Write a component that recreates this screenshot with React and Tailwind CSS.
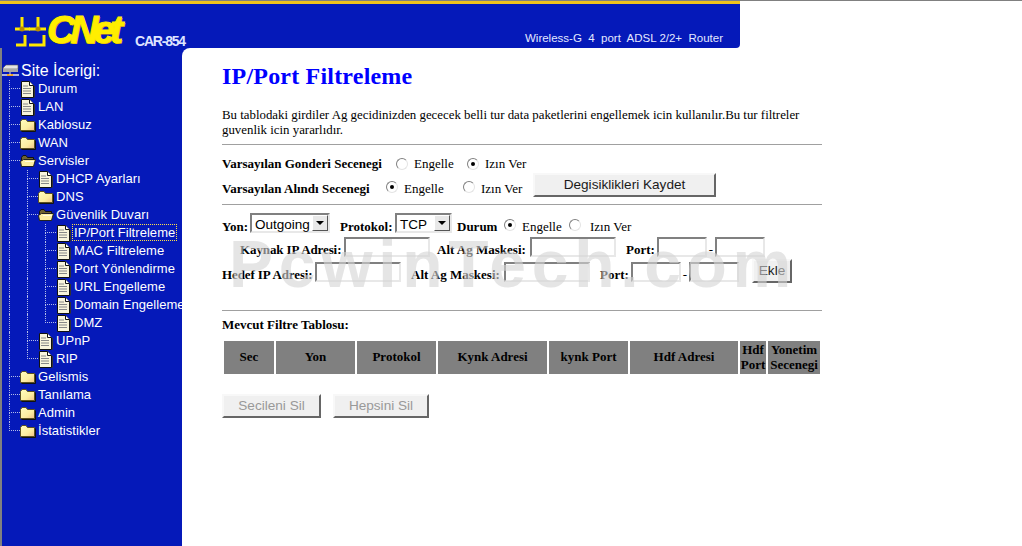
const BLUE = 'bg-[#0519b9]'

// sidebar tree, same order as the router's menu
const tree = [
  { label: 'Durum', icon: 'file' },
  { label: 'LAN', icon: 'file' },
  { label: 'Kablosuz', icon: 'folder' },
  { label: 'WAN', icon: 'folder' },
  {
    label: 'Servisler',
    icon: 'open',
    children: [
      { label: 'DHCP Ayarları', icon: 'file' },
      { label: 'DNS', icon: 'folder' },
      {
        label: 'Güvenlik Duvarı',
        icon: 'open',
        children: [
          { label: 'IP/Port Filtreleme', icon: 'file', active: true },
          { label: 'MAC Filtreleme', icon: 'file' },
          { label: 'Port Yönlendirme', icon: 'file' },
          { label: 'URL Engelleme', icon: 'file' },
          { label: 'Domain Engelleme', icon: 'file' },
          { label: 'DMZ', icon: 'file' },
        ],
      },
      { label: 'UPnP', icon: 'file' },
      { label: 'RIP', icon: 'file' },
    ],
  },
  { label: 'Gelismis', icon: 'folder' },
  { label: 'Tanılama', icon: 'folder' },
  { label: 'Admin', icon: 'folder' },
  { label: 'İstatistikler', icon: 'folder' },
]

function FileIcon() {
  return (
    <svg width="15" height="17" viewBox="0 0 15 17" className="shrink-0">
      <path d="M1.5 .5H9.5L13.5 4.5V16.5H1.5Z" fill="#f8f4dc" stroke="#111" />
      <path d="M9.5 .5V4.5H13.5" fill="#fff" stroke="#111" />
      <path d="M3 5H8M3 7.5H11M3 10H11M3 12.5H11" stroke="#888" />
      <path d="M14.5 5V16.5" stroke="#333" />
    </svg>
  )
}

function FolderIcon() {
  return (
    <svg width="16" height="14" viewBox="0 0 16 14" className="shrink-0">
      <defs>
        <linearGradient id="fld" x1="0" y1="0" x2="1" y2="1">
          <stop offset="0" stopColor="#fffcc0" />
          <stop offset=".6" stopColor="#fdeea0" />
          <stop offset="1" stopColor="#f0c088" />
        </linearGradient>
      </defs>
      <path d="M.5 3.5L2 1.5H6L7.5 3.5H14.5V12.5H.5Z" fill="url(#fld)" stroke="#5a5020" />
      <path d="M15.5 4.5V13.5H1.5" fill="none" stroke="#111" />
    </svg>
  )
}

function OpenFolderIcon() {
  return (
    <svg width="16" height="14" viewBox="0 0 16 14" className="shrink-0">
      <path d="M1.5 3.5L3 1.5H6L7.5 3.5H13.5V12.5H1.5Z" fill="#6e6230" stroke="#111" />
      <path d="M.5 7.5L3.5 5.5H15.5L13.5 12.5H1.5Z" fill="#fdeea0" stroke="#222" />
      <path d="M5 7.5H14" stroke="#fffde0" />
    </svg>
  )
}

const icons = { file: FileIcon, folder: FolderIcon, open: OpenFolderIcon }

function TreeRows({ nodes, prefix = [] }) {
  return nodes.map((node, i) => {
    const last = i === nodes.length - 1
    const Icon = icons[node.icon]
    return (
      <div key={node.label}>
        <div className="flex h-[18px] items-center">
          {prefix.map((line, p) => (
            <div
              key={p}
              className={line ? 'h-full w-[18px] shrink-0 border-l border-dotted border-[#b4bce8]' : 'h-full w-[18px] shrink-0'}
            />
          ))}
          <div className="flex h-full w-[11px] shrink-0 flex-col">
            <div className="h-[9px] border-b border-l border-dotted border-[#b4bce8]" />
            <div className={last ? 'flex-1' : 'flex-1 border-l border-dotted border-[#b4bce8]'} />
          </div>
          <div className="flex w-[18px] shrink-0 items-center">
            <Icon />
          </div>
          <span
            className={
              node.active
                ? '-ml-px mb-px whitespace-nowrap px-px text-[13px] leading-[15px] tracking-[0.05px] text-white outline-1 outline-dotted outline-[#ffe14a]'
                : 'mb-px whitespace-nowrap text-[13px] leading-[15px] tracking-[0.05px] text-white'
            }
          >
            {node.label}
          </span>
        </div>
        {node.children && <TreeRows nodes={node.children} prefix={[...prefix, !last]} />}
      </div>
    )
  })
}

function Sidebar() {
  return (
    <aside className={`${BLUE} w-[182px] shrink-0 overflow-hidden border-l-2 border-[#808080] pl-[7px] pt-[14px]`}>
      <div className="-ml-[7px] flex h-[18px] items-center">
        <svg width="17" height="15" viewBox="0 0 17 15" className="shrink-0">
          <path d="M1 4L4 1H16V5H1Z" fill="#e4e4e4" stroke="#555" strokeWidth=".6" />
          <path d="M1 5H16V8H1Z" fill="#a8a8a8" />
          <path d="M0 11H17" stroke="#e8e8e8" strokeWidth="1.5" />
          <path d="M5 11H11" stroke="#f0a020" strokeWidth="2" />
          <path d="M8 8V11" stroke="#ddd" />
        </svg>
        <span className="ml-[2px] whitespace-nowrap text-[16px] leading-[18px] text-white">Site İcerigi:</span>
      </div>
      <TreeRows nodes={tree} />
    </aside>
  )
}

function Header() {
  return (
    <header className={`${BLUE} flex h-[44px] w-[740px] items-end rounded-br-[4px] pl-[15px]`}>
      <svg width="33" height="31" viewBox="0 0 33 31" className="shrink-0">
        <g stroke="#ffe900" strokeWidth="3" fill="none">
          <path d="M7 0V13M0 12H15" />
          <path d="M10 18V28H1" />
          <path d="M23 0V13M14 12H31" />
          <path d="M29 18V28H14" />
        </g>
        <circle cx="7" cy="12" r="2.5" fill="#b88c00" />
        <circle cx="23" cy="12" r="2.5" fill="#b88c00" />
      </svg>
      <span className="-mb-[2px] -ml-px w-[88px] text-[39px] font-bold italic leading-[40px] tracking-[-5px] text-[#ffee00] [text-shadow:1px_1px_0_#d89c00] [-webkit-text-stroke:1px_#ffee00]">
        CNet
      </span>
      <span className="whitespace-nowrap text-[14px] font-bold leading-[14px] tracking-[-1.2px] text-[#dfe4ff]">
        CAR-854
      </span>
      <span className="mb-[3px] ml-auto mr-[17px] whitespace-pre text-[11.5px] leading-[13px] text-[#e4e8ff]">
        {'Wireless-G  4  port  ADSL 2/2+  Router'}
      </span>
    </header>
  )
}

function Radio({ checked, className = '' }) {
  return (
    <span
      className={`flex h-[12px] w-[12px] shrink-0 items-center justify-center rounded-full border border-b-[#e4e4e4] border-l-[#808080] border-r-[#e4e4e4] border-t-[#808080] bg-white ${className}`}
    >
      {checked && <span className="h-[4px] w-[4px] rounded-full bg-black" />}
    </span>
  )
}

function Label({ children, className = '' }) {
  return <b className={`whitespace-nowrap leading-[15px] ${className}`}>{children}</b>
}

function Text({ children, className = '' }) {
  return <span className={`whitespace-nowrap leading-[15px] ${className}`}>{children}</span>
}

function Field({ className = '' }) {
  return (
    <span className={`h-[20px] shrink-0 border-2 border-b-[#e8e8e8] border-l-[#808080] border-r-[#e8e8e8] border-t-[#808080] bg-white ${className}`} />
  )
}

function Select({ value, className = '' }) {
  return (
    <span
      className={`flex h-[20px] shrink-0 items-center justify-between border-2 border-b-[#e8e8e8] border-l-[#808080] border-r-[#e8e8e8] border-t-[#808080] bg-white font-['Liberation_Sans',sans-serif] text-[13.5px] ${className}`}
    >
      <span className="pl-[3px] pt-[3px] leading-[16px]">{value}</span>
      <span className="flex h-[16px] w-[16px] items-center justify-center border border-b-[#555] border-l-white border-r-[#555] border-t-white bg-[#e8e8e8]">
        <span className="h-0 w-0 border-x-[4px] border-t-[4px] border-x-transparent border-t-black" />
      </span>
    </span>
  )
}

function Button({ children, disabled, className = '' }) {
  return (
    <span
      className={`flex h-[24px] shrink-0 items-center justify-center border-2 border-b-[#666] border-l-[#f8f8f8] border-r-[#666] border-t-[#f8f8f8] bg-[#f0f0f0] font-['Liberation_Sans',sans-serif] text-[13.6px] leading-[16px] ${disabled ? 'text-[#999]' : 'text-[#1a1a1a]'} ${className}`}
    >
      {children}
    </span>
  )
}

function Rule({ className = '' }) {
  return <div className={`h-[1px] w-[600px] bg-[#a0a0a0] ${className}`} />
}

const columns = [
  ['Sec', 'w-[50px]'],
  ['Yon', 'w-[79px]'],
  ['Protokol', 'w-[79px]'],
  ['Kynk Adresi', 'w-[109px]'],
  ['kynk Port', 'w-[79px]'],
  ['Hdf Adresi', 'w-[108px]'],
  ['Hdf Port', 'w-[26px]'],
  ['Yonetim Secenegi', 'w-[52px]'],
]

function FilterTable() {
  return (
    <table className="mt-[6px] table-fixed border-separate border-spacing-[2px]">
      <thead>
        <tr>
          {columns.map(([name, width]) => (
            <th key={name} className={`h-[33px] bg-[#808080] p-0 pb-[2px] text-center text-[13px] font-bold leading-[15px] text-black ${width}`}>
              {name}
            </th>
          ))}
        </tr>
      </thead>
    </table>
  )
}

function Main() {
  return (
    <main className="relative flex-1 rounded-tl-[8px] bg-white pl-[40px] pt-[14px] font-['Liberation_Serif',serif] text-[13px] text-black">
      <h1 className="text-[24px] font-bold leading-[28px] tracking-[0.2px] text-[#0000ff]">IP/Port Filtreleme</h1>
      <p className="mt-[18px] w-[600px] text-[12.87px] leading-[15px]">
        Bu tablodaki girdiler Ag gecidinizden gececek belli tur data paketlerini engellemek icin kullanılır.Bu tur filtreler guvenlik icin yararlıdır.
      </p>
      <Rule className="mt-[6px]" />

      <div className="mt-[11px] flex h-[15px] items-center">
        <Label className="w-[174px]">Varsayılan Gonderi Secenegi</Label>
        <Radio />
        <Text className="ml-[6px] w-[47px]">Engelle</Text>
        <Radio checked className="ml-[6px]" />
        <Text className="ml-[6px]">Izın Ver</Text>
      </div>
      <div className="mt-[2px] flex h-[24px] items-center">
        <Label className="mt-[6px] w-[164px]">Varsayılan Alındı Secenegi</Label>
        <Radio checked className="mt-[4px]" />
        <Text className="ml-[6px] mt-[6px] w-[47px]">Engelle</Text>
        <Radio className="ml-[12px] mt-[4px]" />
        <Text className="ml-[6px] mt-[6px] w-[52px]">Izın Ver</Text>
        <Button className="w-[183px]">Degisiklikleri Kaydet</Button>
      </div>
      <Rule className="mt-[7px]" />

      <div className="mt-[8px] flex h-[20px] items-end">
        <Label className="-mb-px w-[28px]">Yon:</Label>
        <Select value="Outgoing" className="w-[80px]" />
        <Label className="-mb-px ml-[10px] w-[55px]">Protokol:</Label>
        <Select value="TCP" className="w-[57px]" />
        <Label className="-mb-px ml-[5px] w-[47px]">Durum</Label>
        <Radio checked className="mb-[2px]" />
        <Text className="-mb-px ml-[6px] w-[47px]">Engelle</Text>
        <Radio className="mb-[2px]" />
        <Text className="-mb-px ml-[9px]">Izın Ver</Text>
      </div>
      <div className="mt-[4px] flex h-[20px] items-end pl-[18px]">
        <Label className="w-[104px] tracking-[-0.1px]">Kaynak IP Adresi:</Label>
        <Field className="w-[86px]" />
        <Label className="ml-[7px] w-[93px]">Alt Ag Maskesi:</Label>
        <Field className="w-[86px]" />
        <Label className="ml-[10px] w-[31px]">Port:</Label>
        <Field className="w-[50px]" />
        <Text className="w-[8px] text-center">-</Text>
        <Field className="w-[50px]" />
      </div>
      <div className="mt-[5px] flex h-[20px] items-end">
        <Label className="w-[93px] tracking-[-0.1px]">Hedef IP Adresi:</Label>
        <Field className="w-[86px]" />
        <Label className="ml-[10px] w-[93px]">Alt Ag Maskesi:</Label>
        <Field className="w-[86px]" />
        <Label className="ml-[10px] w-[31px]">Port:</Label>
        <Field className="w-[50px]" />
        <Text className="w-[8px] text-center">-</Text>
        <Field className="w-[50px]" />
        <Button className="-mb-[1px] ml-[13px] w-[40px]">Ekle</Button>
      </div>
      <Rule className="mt-[28px]" />

      <div className="mt-[6px] h-[15px] leading-[15px]">
        <Label>Mevcut Filtre Tablosu:</Label>
      </div>
      <div className="h-px" />
      <FilterTable />

      <div className="mt-[18px] flex">
        <Button disabled className="w-[99px]">Secileni Sil</Button>
        <Button disabled className="ml-[12px] w-[96px]">Hepsini Sil</Button>
      </div>
    </main>
  )
}

export default function App() {
  return (
    <div className="relative flex h-[546px] w-[1022px] flex-col overflow-hidden bg-white font-['Liberation_Sans',Arial,sans-serif]">
      <div className="h-px bg-[#808080]" />
      <div className="h-[3px] w-[740px] bg-[#f2c21a]" />
      <Header />
      <div className={`${BLUE} flex flex-1`}>
        <Sidebar />
        <Main />
      </div>
      {/* watermark sits over the form and greys out the labels below it */}
      <div className="pointer-events-none absolute left-[229px] top-[226px] whitespace-nowrap text-[66px] font-bold leading-[76px] tracking-[5.7px] text-[#d5d5d5] opacity-60">
        PcwinTech.com
      </div>
    </div>
  )
}
